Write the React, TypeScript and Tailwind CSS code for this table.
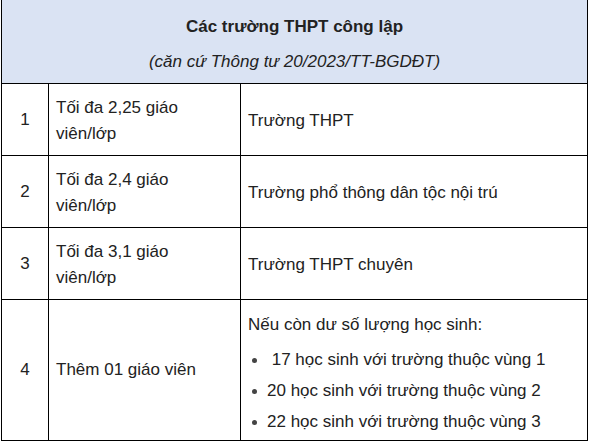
import React from "react";

const rows = [
  { n: "1", a: ["Tối đa 2,25 giáo", "viên/lớp"], b: "Trường THPT" },
  { n: "2", a: ["Tối đa 2,4 giáo", "viên/lớp"], b: "Trường phổ thông dân tộc nội trú" },
  { n: "3", a: ["Tối đa 3,1 giáo", "viên/lớp"], b: "Trường THPT chuyên" },
];

export default function App() {
  return (
    <div className="w-[590px] h-[444px] overflow-hidden bg-white text-[#222] text-[17px] leading-[26px]" style={{ fontFamily: '"Liberation Sans", Arial, sans-serif' }}>
      <div className="ml-px -mt-px w-[587px] border border-black">
        <div className="h-[83px] bg-[#dae3f3] flex flex-col items-center pt-[14px]">
          <div className="font-bold">Các trường THPT công lập</div>
          <div className="italic mt-[9px]">(căn cứ Thông tư 20/2023/TT-BGDĐT)</div>
        </div>
        {rows.map((r) => (
          <div key={r.n} className="flex h-[72px] border-t border-black">
            <div className="w-[46px] flex items-center justify-center">{r.n}</div>
            <div className="w-[192px] border-l border-black flex flex-col justify-center pl-[7px] pt-[2px]">
              <div>{r.a[0]}</div>
              <div>{r.a[1]}</div>
            </div>
            <div className="flex-1 border-l border-black flex items-center pl-[7px] pt-[2px]">{r.b}</div>
          </div>
        ))}
        <div className="flex h-[141px] border-t border-black">
          <div className="w-[46px] flex items-center justify-center">4</div>
          <div className="w-[192px] border-l border-black flex items-center pl-[7px]">Thêm 01 giáo viên</div>
          <div className="flex-1 border-l border-black pl-[7px] pt-[12px]">
            <div>Nếu còn dư số lượng học sinh:</div>
            <ul className="mt-[9px] flex flex-col gap-[5px]">
              {["\u00a017 học sinh với trường thuộc vùng 1", "20 học sinh với trường thuộc vùng 2", "22 học sinh với trường thuộc vùng 3"].map((t) => (
                <li key={t} className="flex items-center">
                  <span className="ml-[4px] w-[5px] h-[5px] rounded-full bg-[#444] mr-[10px]" />
                  <span>{t}</span>
                </li>
              ))}
            </ul>
          </div>
        </div>
      </div>
    </div>
  );
}
